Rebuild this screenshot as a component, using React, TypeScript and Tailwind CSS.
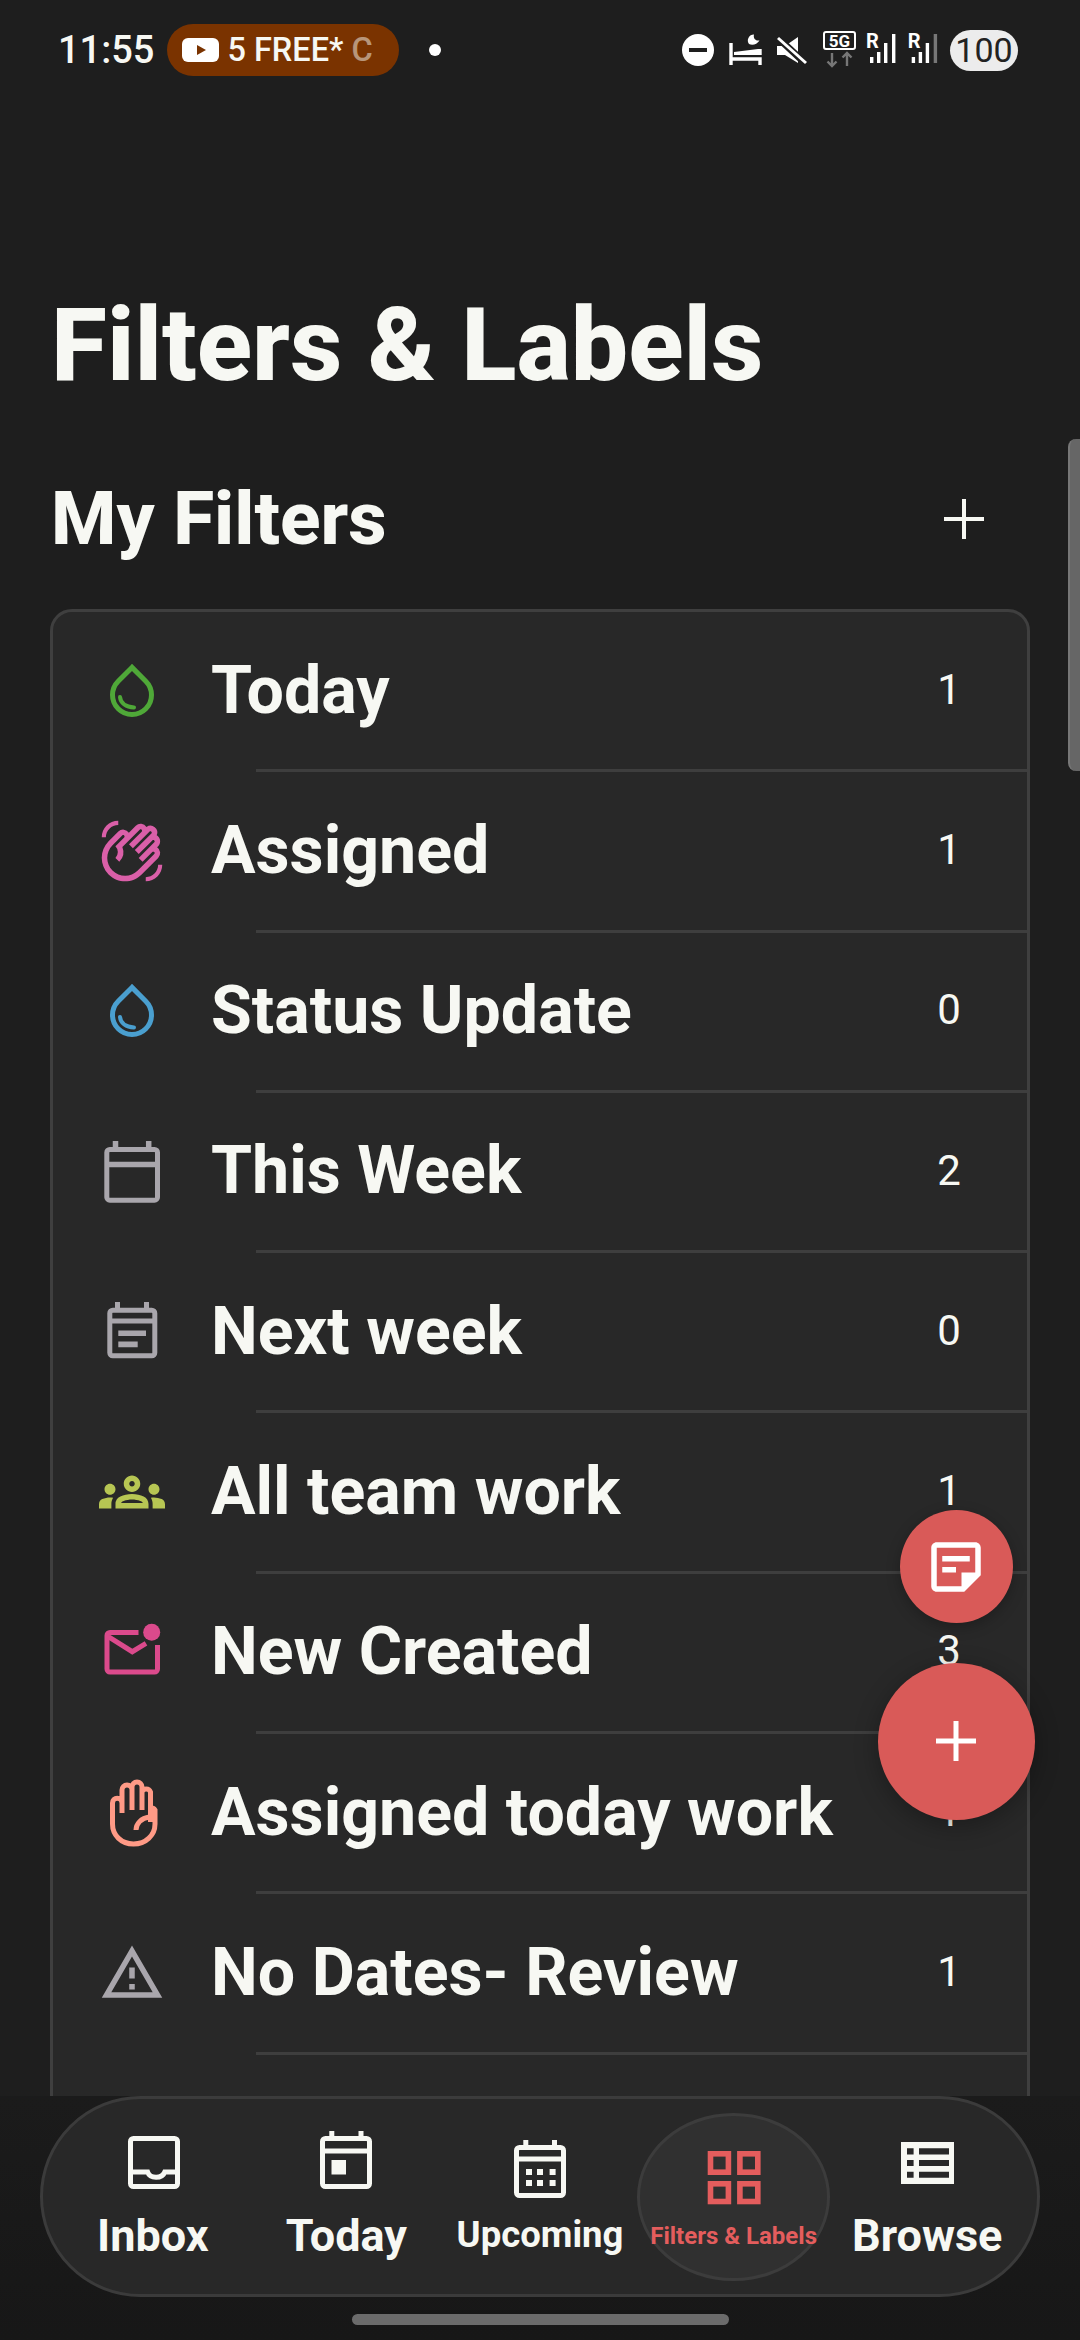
import type { ReactNode } from 'react'
import {
  MdOutlineWavingHand,
  MdOutlineGroups,
  MdOutlineWarningAmber,
  MdOutlineStickyNote2,
} from 'react-icons/md'

function Box({ color, children }: { color: string; children: ReactNode }) {
  return (
    <svg width="66" height="66" viewBox="0 0 66 66" fill="none" stroke={color} strokeWidth="5" className="shrink-0 overflow-visible">
      {children}
    </svg>
  )
}

function Drop({ color }: { color: string }) {
  return (
    <Box color={color}>
      <path d="M33 9.400 L19.200 23.200 A19.500 19.500 0 1 0 46.800 23.200 Z" strokeLinejoin="miter" />
      <path d="M21 39 C21.500 45 27 49 35 49.500" strokeWidth="4" strokeLinecap="round" />
    </Box>
  )
}

const grey = '#a9a6ac'

const rows: { name: string; count: number; icon: ReactNode }[] = [
  { name: 'Today', count: 1, icon: <Drop color="#4fa838" /> },
  { name: 'Assigned', count: 1, icon: <MdOutlineWavingHand size={66} color="#da5fa8" className="shrink-0" /> },
  { name: 'Status Update', count: 0, icon: <Drop color="#4a9fcf" /> },
  {
    name: 'This Week',
    count: 2,
    icon: (
      <Box color={grey}>
        <rect x="7.800" y="10.500" width="50.700" height="50.700" rx="3" />
        <path d="M7.800 25.500H58.500M16.500 2V10M49.700 2V10" strokeWidth="5.500" />
      </Box>
    ),
  },
  {
    name: 'Next week',
    count: 0,
    icon: (
      <Box color={grey}>
        <rect x="10.800" y="11.200" width="45" height="45.600" rx="3" />
        <path d="M10.800 22H55.800M18.500 3V11M47.500 3V11" />
        <path d="M19.300 34.200H47M19.300 45.400H38.700" strokeWidth="5.600" />
      </Box>
    ),
  },
  { name: 'All team work', count: 1, icon: <MdOutlineGroups size={66} color="#b7c653" className="shrink-0" /> },
  {
    name: 'New Created',
    count: 3,
    icon: (
      <Box color="#db4a8c">
        <path d="M39.500 13.500H11a3 3 0 0 0-3 3V50a3 3 0 0 0 3 3H55.500a3 3 0 0 0 3-3V26" />
        <path d="M9.300 17.700L33.300 32.700L47 24.300" />
        <circle cx="52.700" cy="13.300" r="8.500" fill="#db4a8c" stroke="none" />
      </Box>
    ),
  },
  {
    name: 'Assigned today work',
    count: 1,
    icon: (
      <Box color="#ff9a86">
        <path d="M13.500 44 V23 a4.700 4.700 0 0 1 9.500 0 V33 V10 a5 5 0 0 1 10 0 V30 V7 a5 5 0 0 1 10 0 V30 V12 a4.500 4.500 0 0 1 8.500 0 V42 V28 a4.300 4.300 0 0 1 4.500 2 V44 C56 55 47 64 34.500 64 C22 64 13.500 55 13.500 44 Z" />
        <path d="M37 50 C37 44 42 38 50.500 37" />
      </Box>
    ),
  },
  { name: 'No Dates- Review', count: 1, icon: <MdOutlineWarningAmber size={66} color={grey} className="shrink-0" /> },
]

function Row({ name, count, icon }: { name: string; count: number; icon: ReactNode }) {
  return (
    <>
      <div className="flex h-[157.300px] items-center pl-[46px] pr-[54px]">
        {icon}
        <span className="mb-[2px] ml-[46px] flex-1 text-[66.300px] font-bold leading-none">{name}</span>
        <span className="mb-[2px] w-12 text-center text-[42px] leading-none">{count}</span>
      </div>
      <div className="ml-[203px] h-[3px] bg-[#3e3e3e]" />
    </>
  )
}

function StatusIcons() {
  const signal = (dx: number, last: string) => (
    <g transform={`translate(${dx} 0)`}>
      <text x="186" y="23" fill="#fff" fontSize="20" fontWeight="700" stroke="none">R</text>
      <rect x="190" y="32" width="3.400" height="6" fill="#fff" />
      <rect x="197" y="27" width="3.400" height="11" fill="#fff" />
      <rect x="204" y="18" width="3.400" height="20" fill="#fff" />
      <rect x="212" y="9" width="3.400" height="29" fill={last} />
    </g>
  )
  return (
    <svg width="270" height="50" viewBox="0 0 270 50" className="shrink-0">
      <circle cx="18" cy="25" r="16" fill="#fff" />
      <rect x="9" y="23" width="18" height="4" fill="#1e1e1e" />
      <path d="M49.300 18H52.700V32.300H78.300H81.700V40H78.300V35.700H52.700V40H49.300Z" fill="#fff" />
      <path d="M54 30V27L78 24H81.700V30Z" fill="#fff" />
      <path d="M74 9.500A6 6 0 0 0 69 19C72.500 20.500 77 19.500 79.500 15.500C75.500 16 73 13.500 74 9.500Z" fill="#fff" />
      <path d="M97 21H105L118 12V38L105 30H97Z" fill="#fff" />
      <path d="M96 11L126 39" stroke="#1e1e1e" strokeWidth="7" />
      <path d="M98 13L126 38" stroke="#fff" strokeWidth="3" />
      <rect x="144" y="7" width="31" height="17" rx="2" fill="none" stroke="#fff" strokeWidth="2" />
      <text x="159.500" y="21.500" fill="#fff" fontSize="17" fontWeight="700" textAnchor="middle">5G</text>
      <path d="M152 28V41M147.500 36.500L152 41L156.500 36.500M167 41V28M162.500 32.500L167 28L171.500 32.500" fill="none" stroke="#777" strokeWidth="2.400" />
      {signal(0, '#fff')}
      {signal(41.700, '#777')}
    </svg>
  )
}

function StatusBar() {
  return (
    <div className="flex h-[100px] items-center pl-[58px] pr-[62px]">
      <span className="text-[38px] font-medium leading-none">11:55</span>
      <div className="ml-[13px] flex h-[52px] w-[232px] items-center rounded-full bg-[#7a3300] pl-[15px]">
        <svg width="37" height="24" viewBox="0 0 37 24" className="shrink-0">
          <rect width="37" height="24" rx="6" fill="#fff" />
          <path d="M15 7L24 12L15 17Z" fill="#7a3300" />
        </svg>
        <span className="ml-[8px] whitespace-nowrap text-[32.500px] font-medium leading-none">
          5 FREE* <span className="opacity-50">C</span>
        </span>
      </div>
      <div className="ml-[30px] h-3 w-3 rounded-full bg-white" />
      <div className="ml-auto flex items-center">
        <StatusIcons />
        <div className="flex h-[41px] w-[68px] items-center justify-center rounded-full bg-[#ececec] text-[34px] leading-none text-[#222]">100</div>
      </div>
    </div>
  )
}

type Tab = { label: string; cls: string; active?: boolean; icon: ReactNode }

const tabs: Tab[] = [
  {
    label: 'Inbox',
    cls: 'text-[45px] font-bold',
    icon: (
      <>
        <rect x="7.500" y="12.500" width="47" height="48" rx="3" />
        <path d="M7.500 46H24.600C27 53 39 53 41.800 46H54.500" />
      </>
    ),
  },
  {
    label: 'Today',
    cls: 'text-[45px] font-bold',
    icon: (
      <>
        <rect x="6.500" y="12.500" width="47" height="48" rx="3" />
        <path d="M6.500 25H53.500M15.800 5V12M45 5V12" />
        <rect x="15.500" y="34" width="14.500" height="14.500" fill="#f7f8f3" stroke="none" />
      </>
    ),
  },
  {
    label: 'Upcoming',
    cls: 'text-[36.500px] font-bold',
    icon: (
      <>
        <rect x="6.500" y="21.500" width="47" height="48" rx="3" />
        <path d="M6.500 33H53.500M15.800 14V21M44.500 14V21" />
        <path d="M16 43h6v6h-6zM27 43h6v6h-6zM39.600 43h6v6h-6zM16 54h6v6h-6zM27 54h6v6h-6zM39.600 54h6v6h-6z" fill="#f7f8f3" stroke="none" />
      </>
    ),
  },
  {
    label: 'Filters & Labels',
    cls: 'text-[24px] font-bold text-[#e45d5d]',
    active: true,
    icon: (
      <g stroke="#e45d5d" strokeWidth="5.600">
        <rect x="6.500" y="27.800" width="17.900" height="18.400" />
        <rect x="35.900" y="27.800" width="17.900" height="18.400" />
        <rect x="6.500" y="57.800" width="17.900" height="17.700" />
        <rect x="35.900" y="57.800" width="17.900" height="17.700" />
      </g>
    ),
  },
  {
    label: 'Browse',
    cls: 'text-[45px] font-bold',
    icon: (
      <>
        <rect x="4" y="16" width="53" height="42" fill="#f7f8f3" stroke="none" />
        <path d="M10 22.300h6.600v6.300h-6.600zM22 22.300h30v6.300h-30zM10 34h6.600v6h-6.600zM22 34h30v6h-30zM10 45.700h6.600v6h-6.600zM22 45.700h30v6h-30z" fill="#282828" stroke="none" />
      </>
    ),
  },
]

function BottomNav() {
  return (
    <div className="h-[244px] bg-gradient-to-b from-[#1b1b1b] to-[#171717] px-[40px]">
      <nav className="grid h-[201px] grid-cols-5 items-center rounded-full border-[3px] border-[#3b3b3b] bg-[#282828] pl-[13px] pr-[13px]">
        {tabs.map((t) => (
          <div
            key={t.label}
            className={`flex h-[168px] flex-col items-center rounded-[50%] border-[3px] pt-[10px] ${
              t.active ? 'border-[#3c3c3c] bg-[#303030]' : 'border-transparent'
            }`}
          >
            <svg width="60" height="80" viewBox="0 0 60 80" fill="none" stroke="#f7f8f3" strokeWidth="5" className="shrink-0">
              {t.icon}
            </svg>
            <div className={`flex h-[60px] items-center whitespace-nowrap leading-none ${t.cls}`}>{t.label}</div>
          </div>
        ))}
      </nav>
      <div className="mx-auto mt-[17px] h-[11px] w-[377px] rounded-full bg-[#6b6b6b]" />
    </div>
  )
}

export default function App() {
  return (
    <div className="relative flex h-[2340px] w-[1080px] flex-col overflow-hidden bg-[#1e1e1e] text-[#f7f8f3] [font-family:Roboto,sans-serif]">
      <div className="flex-1 overflow-hidden">
        <StatusBar />
        <h1 className="pl-[51px] pt-[190px] text-[102px] font-extrabold leading-[110px]">Filters &amp; Labels</h1>
        <div className="flex items-center justify-between pl-[51px] pr-[96px] pt-[79px]">
          <h2 className="text-[74.700px] font-extrabold leading-[80px]">My Filters</h2>
          <svg width="40" height="40" viewBox="0 0 40 40" stroke="#f7f8f3" strokeWidth="4">
            <path d="M20 0V40M0 20H40" />
          </svg>
        </div>
        <div className="mx-[50px] mt-[50px] rounded-[22px] border-[3px] border-[#3f3f3f] bg-[#282828]">
          {rows.map((r) => (
            <Row key={r.name} {...r} />
          ))}
          <div className="h-[160px]" />
        </div>
      </div>
      <BottomNav />

      {/* scrollbar + the two floating buttons sit over the list */}
      <div className="absolute right-0 top-[439px] h-[332px] w-[12px] rounded-l-[8px] border-l-2 border-[#777] bg-[#666]" />
      <button className="absolute left-[899.500px] top-[1510px] grid h-[113px] w-[113px] place-items-center rounded-full bg-[#d95a58] shadow-[0_4px_14px_rgba(0,0,0,0.25)]">
        <MdOutlineStickyNote2 size={66} color="#fff" />
      </button>
      <button className="absolute left-[877.500px] top-[1662.500px] grid h-[157px] w-[157px] place-items-center rounded-full bg-[#d95a58] shadow-[0_6px_24px_rgba(0,0,0,0.3)]">
        <svg width="40" height="40" viewBox="0 0 40 40" stroke="#fff" strokeWidth="5">
          <path d="M20 0V40M0 20H40" />
        </svg>
      </button>
    </div>
  )
}
